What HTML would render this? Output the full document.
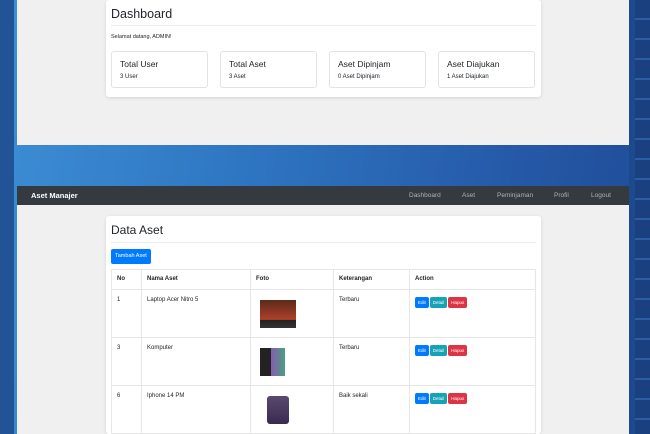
<!DOCTYPE html>
<html><head><style>
*{box-sizing:border-box;margin:0;padding:0}
html,body{width:650px;height:434px;overflow:hidden}
body{font-family:"Liberation Sans",Arial,sans-serif;color:#212529;position:relative;
background:linear-gradient(100deg,#3d8fd6 0%,#2e74c0 40%,#2559a8 75%,#1e4a94 100%)}
.edgeL{position:absolute;left:0;top:0;width:14px;height:434px;background:#215396}
.edgeR{position:absolute;right:0;top:0;width:21px;height:434px;background:#1d4a8c}
.edgeR:after{content:"";position:absolute;left:6px;top:0;width:15px;height:434px;background:repeating-linear-gradient(180deg,#1a4080 0 18px,#2c5ea4 18px 20px)}
.panel{position:absolute;left:17px;width:612px;background:#f0f0f0}
.card{position:absolute;left:106px;width:435px;background:#fff;box-shadow:0 1px 3px rgba(0,0,0,.12);border-radius:3px}
.stat{position:absolute;top:51px;width:97px;height:37px;border:1px solid #e3e3e3;border-radius:3px;padding:7px 8px}
.stat b{display:block;font-weight:normal;font-size:8.5px}
.stat i{display:block;font-style:normal;font-size:6px;margin-top:5px}
.nav{position:absolute;left:17px;top:186px;width:612px;height:19px;background:#343a40;color:#fff;font-size:7.5px}
.nav span{position:absolute;top:6px;color:#aeb2b6;font-size:6.5px}
table{position:absolute;left:5px;top:53px;width:425px;border-collapse:collapse;font-size:6px}
td,th{border:1px solid #e6e6e6;vertical-align:top;text-align:left;padding:7px 5px}
th{height:20px;font-weight:bold;padding:6px 5px}
td{height:48px}
.b{display:inline-block;color:#fff;font-size:4.5px;line-height:11px;height:11px;padding:0 3px;border-radius:2px;margin-right:1px}
.img{width:36px;height:28px;margin:3px 0 0 4px}
</style></head><body>
<div class="edgeL"></div><div class="edgeR"></div>
<div class="panel" style="top:0;height:145px"></div>
<div class="card" style="top:0;height:97px">
 <div style="position:absolute;left:5px;top:7px;font-size:12.5px">Dashboard</div>
 <div style="position:absolute;left:5px;right:5px;top:25px;border-top:1px solid #ececec"></div>
 <div style="position:absolute;left:5px;top:34px;font-size:5.5px">Selamat datang, ADMIN!</div>
 <div class="stat" style="left:5px"><b>Total User</b><i>3 User</i></div>
 <div class="stat" style="left:114px"><b>Total Aset</b><i>3 Aset</i></div>
 <div class="stat" style="left:223px"><b>Aset Dipinjam</b><i>0 Aset Dipinjam</i></div>
 <div class="stat" style="left:332px"><b>Aset Diajukan</b><i>1 Aset Diajukan</i></div>
</div>
<div class="nav"><b style="position:absolute;left:14px;top:5px">Aset Manajer</b>
<span style="left:392px">Dashboard</span><span style="left:445px">Aset</span><span style="left:480px">Peminjaman</span><span style="left:537px">Profil</span><span style="left:574px">Logout</span></div>
<div class="panel" style="top:205px;height:229px"></div>
<div class="card" style="top:216px;height:218px">
 <div style="position:absolute;left:5px;top:7px;font-size:12px">Data Aset</div>
 <div style="position:absolute;left:5px;right:5px;top:26px;border-top:1px solid #ececec"></div>
 <div style="position:absolute;left:5px;top:33px;height:15px;line-height:15px;background:#007bff;color:#fff;font-size:5.5px;padding:0 4px;border-radius:2px">Tambah Aset</div>
 <table>
 <tr><th style="width:30px">No</th><th style="width:109px">Nama Aset</th><th style="width:83px">Foto</th><th style="width:76px">Keterangan</th><th>Action</th></tr>
 <tr><td>1</td><td>Laptop Acer Nitro 5</td><td><div class="img" style="background:linear-gradient(#5a2a1a,#b0402a 70%,#222 72%,#333)"></div></td><td>Terbaru</td><td><span class="b" style="background:#007bff">Edit</span><span class="b" style="background:#17a2b8">Detail</span><span class="b" style="background:#dc3545">Hapus</span></td></tr>
 <tr><td>3</td><td>Komputer</td><td><div class="img" style="background:linear-gradient(90deg,#222 30%,#8a5ab0 30%,#4aa080 70%,#fff 70%)"></div></td><td>Terbaru</td><td><span class="b" style="background:#007bff">Edit</span><span class="b" style="background:#17a2b8">Detail</span><span class="b" style="background:#dc3545">Hapus</span></td></tr>
 <tr><td>6</td><td>Iphone 14 PM</td><td><div class="img" style="width:22px;margin-left:11px;border-radius:3px;background:linear-gradient(#5a4a70,#3a2a50)"></div></td><td>Baik sekali</td><td><span class="b" style="background:#007bff">Edit</span><span class="b" style="background:#17a2b8">Detail</span><span class="b" style="background:#dc3545">Hapus</span></td></tr>
 </table>
</div>
</body></html>
